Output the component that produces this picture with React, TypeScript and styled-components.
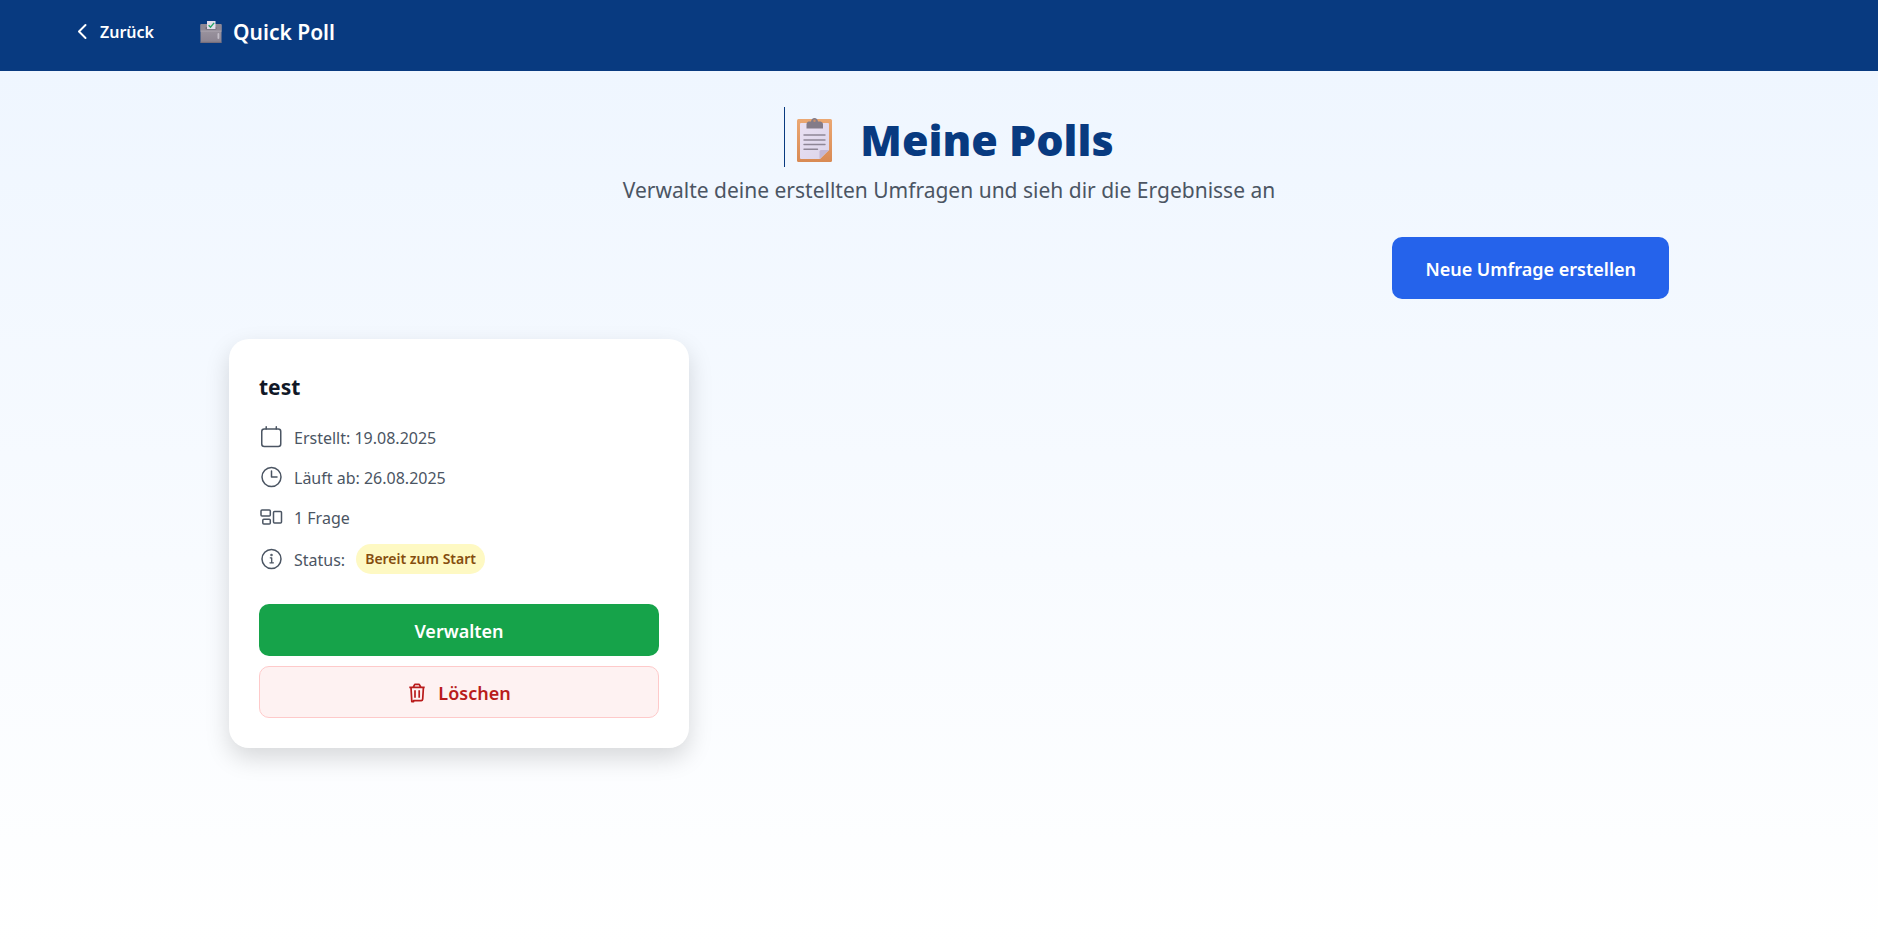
import React from "react";
import styled, { createGlobalStyle } from "styled-components";

const GlobalStyle = createGlobalStyle`
  *, *::before, *::after { box-sizing: border-box; }
  body { margin: 0; }
  body, button {
    font-family: "Segoe UI", "Noto Sans", "Open Sans", sans-serif;
  }
`;

const Page = styled.div`
  min-height: 100vh;
  display: flex;
  flex-direction: column;
  background: #083a80;
`;

const Header = styled.header`
  display: flex;
  align-items: center;
  gap: 46px;
  padding: 16px 76px 23px;
  color: #fff;
`;

const BackLink = styled.a`
  display: flex;
  align-items: center;
  gap: 10px;
  color: inherit;
  text-decoration: none;
  font-size: 16px;
  font-weight: 600;
  line-height: 32px;
`;

const Brand = styled.div`
  display: flex;
  align-items: center;
  gap: 11px;
  font-size: 21px;
  font-weight: 600;
  line-height: 32px;
`;

const Main = styled.main`
  flex: 1;
  padding: 36px 0 40px 20px;
  background: linear-gradient(180deg, #eff6ff 0%, #ffffff 100%);
`;

const Content = styled.div`
  max-width: 1440px;
  margin: 0 auto;
`;

const Intro = styled.div`
  display: flex;
  flex-direction: column;
  align-items: center;
  gap: 7px;
  text-align: center;
`;

const Title = styled.h1`
  display: flex;
  align-items: center;
  gap: 27px;
  margin: 0;
  padding: 6px 0 0 12px;
  border-left: 1px solid #083a80;
  color: #083a80;
  font-size: 43px;
  font-weight: 900;
  line-height: 54px;
`;

const Subtitle = styled.p`
  margin: 0;
  color: #4b5563;
  font-size: 21px;
  line-height: 32px;
`;

const Actions = styled.div`
  display: flex;
  justify-content: flex-end;
  margin: 31px 0 40px;
`;

const Button = styled.button`
  display: flex;
  align-items: center;
  justify-content: center;
  gap: 11px;
  min-height: 52px;
  padding: 2px 20px 0;
  border: 0;
  border-radius: 10px;
  font-size: 18px;
  font-weight: 600;
  line-height: 24px;
  cursor: pointer;
`;

const CreateButton = styled(Button)`
  min-height: 62px;
  padding: 2px 33px 0;
  background: #2563eb;
  color: #fff;
`;

const ManageButton = styled(Button)`
  background: #16a34a;
  color: #fff;
`;

const DeleteButton = styled(Button)`
  border: 1px solid #fecaca;
  background: #fef2f2;
  color: #b91c1c;
`;

const PollGrid = styled.div`
  display: grid;
  grid-template-columns: repeat(3, 1fr);
  gap: 30px;
`;

const Card = styled.article`
  padding: 30px;
  border-radius: 20px;
  background: #fff;
  box-shadow: 0 10px 25px rgba(0, 0, 0, 0.15);
`;

const CardTitle = styled.h2`
  margin: 0 0 19px;
  color: #111827;
  font-size: 21px;
  font-weight: 700;
  line-height: 36px;
`;

const Details = styled.ul`
  display: flex;
  flex-direction: column;
  gap: 14px;
  margin: 0 0 30px;
  padding: 0;
  list-style: none;
`;

const Detail = styled.li`
  display: flex;
  align-items: center;
  gap: 11px;
  color: #4b5563;
  font-size: 16px;
`;

const DetailText = styled.span`
  padding-top: 2px;
  line-height: 24px;
`;

const StatusBadge = styled.span`
  padding: 0 9px;
  border-radius: 15px;
  background: #fef9c3;
  color: #854d0e;
  font-size: 14px;
  font-weight: 600;
  line-height: 30px;
`;

const CardActions = styled.div`
  display: flex;
  flex-direction: column;
  gap: 10px;
`;

const LineIcon = ({ children }: { children: React.ReactNode }) => (
  <svg width="24" height="24" viewBox="0 0 24 24" fill="none" stroke="currentColor" strokeWidth="1.5" strokeLinecap="round" strokeLinejoin="round" aria-hidden="true">
    {children}
  </svg>
);

const ChevronIcon = () => (
  <svg width="14" height="18" viewBox="0 0 14 18" fill="none" stroke="currentColor" strokeWidth="2" strokeLinecap="round" strokeLinejoin="round" aria-hidden="true">
    <path d="M9.500 2 3 8.500l6.500 6.500" />
  </svg>
);

const BallotIcon = () => (
  <svg width="22" height="22" viewBox="0 0 22 22" aria-hidden="true">
    <defs>
      <linearGradient id="ballot" x1="0" y1="0" x2="0" y2="1">
        <stop offset="0" stopColor="#a19ba5" />
        <stop offset="1" stopColor="#8b8390" />
      </linearGradient>
    </defs>
    <rect x="0.500" y="3" width="21" height="19" rx="1" fill="url(#ballot)" />
    <rect x="0.500" y="3" width="21" height="7" rx="1" fill="#8f8894" />
    <rect x="0.500" y="9.500" width="21" height="1.200" fill="#a8a2ac" />
    <rect x="5.500" y="6" width="11" height="2.400" rx="1" fill="#6f6776" />
    <rect x="7" y="0" width="8.500" height="8" fill="#e4dfec" />
    <path d="m8.600 4.200 1.900 1.900 3.600-4.200" fill="none" stroke="#27a567" strokeWidth="1.400" />
    <rect x="17.500" y="12" width="1.800" height="6" rx="0.900" fill="#c3bec8" />
    <rect x="0.500" y="20.800" width="21" height="1.200" fill="#766e7c" />
  </svg>
);

const ClipboardIcon = () => (
  <svg width="36" height="44" viewBox="0 0 36 44" aria-hidden="true">
    <defs>
      <linearGradient id="board" x1="0" y1="0" x2="0" y2="1">
        <stop offset="0" stopColor="#eba873" />
        <stop offset="1" stopColor="#d98a54" />
      </linearGradient>
      <linearGradient id="paper" x1="0" y1="0" x2="1" y2="1">
        <stop offset="0" stopColor="#e9e0f3" />
        <stop offset="1" stopColor="#dcd5ea" />
      </linearGradient>
    </defs>
    <rect x="0" y="1" width="35" height="43" rx="1.500" fill="url(#board)" />
    <path d="M4 5h27q1 0 1 1v26l-9 9H4q-1 0-1-1V6q0-1 1-1z" fill="url(#paper)" />
    <path d="M22.500 41v-7.500q0-1.500 1.500-1.500h8z" fill="#c3b6d3" />
    <path d="M9.500 10.500V6q0-2 2-2.500h2.500Q14.500 0 17.500 0T21 3.500h2.500q2.500 .5 2.500 2.500v4.500z" fill="#837b88" />
    <circle cx="17.500" cy="2.800" r="1.200" fill="#c98d68" />
    <path d="M7 17h21M7 22h21M7 26.500h21M7 31.300h13.500" stroke="#8e8696" strokeWidth="1.400" strokeLinecap="round" />
  </svg>
);

const TrashIcon = () => (
  <svg width="20" height="20" viewBox="0 0 20 20" fill="none" stroke="currentColor" strokeWidth="1.700" strokeLinejoin="round" aria-hidden="true">
    <path d="M2.300 4.300h15.400M6.300 4l1.500-2.600h4.400L13.700 4M4 4.600l.8 14h1.800v-1h7.600q1.300 0 1.500-1.500L16.400 4.600" />
    <path d="M8 7.200v7.600M12.200 7.200v7.600" />
  </svg>
);

export default function App() {
  return (
    <>
      <GlobalStyle />
      <Page>
        <Header>
          <BackLink href="#">
            <ChevronIcon />
            Zurück
          </BackLink>
          <Brand>
            <BallotIcon />
            Quick Poll
          </Brand>
        </Header>
        <Main>
          <Content>
            <Intro>
              <Title>
                <ClipboardIcon />
                Meine Polls
              </Title>
              <Subtitle>Verwalte deine erstellten Umfragen und sieh dir die Ergebnisse an</Subtitle>
            </Intro>
            <Actions>
              <CreateButton type="button">Neue Umfrage erstellen</CreateButton>
            </Actions>
            <PollGrid>
              <Card>
                <CardTitle>test</CardTitle>
                <Details>
                  <Detail>
                    <LineIcon>
                      <rect x="2.750" y="4" width="19" height="17.500" rx="2.500" />
                      <path d="M7.200 1.800V4M17.300 1.800V4" />
                    </LineIcon>
                    <DetailText>Erstellt: 19.08.2025</DetailText>
                  </Detail>
                  <Detail>
                    <LineIcon>
                      <circle cx="12.500" cy="12" r="9.500" />
                      <path d="M12.500 6v6H18" />
                    </LineIcon>
                    <DetailText>Läuft ab: 26.08.2025</DetailText>
                  </Detail>
                  <Detail>
                    <LineIcon>
                      <rect x="2" y="5" width="9.300" height="6" rx="1" />
                      <rect x="3.800" y="14.300" width="7.500" height="4.700" rx="1" />
                      <rect x="14.500" y="6.500" width="8" height="11.500" rx="1" />
                    </LineIcon>
                    <DetailText>1 Frage</DetailText>
                  </Detail>
                  <Detail>
                    <LineIcon>
                      <circle cx="12.500" cy="12" r="9.500" />
                      <path d="M11.300 10.800h1.400v5M11 15.800h3.400" strokeWidth="1.300" />
                      <circle cx="12.500" cy="7.900" r="0.500" />
                    </LineIcon>
                    <DetailText>Status:</DetailText>
                    <StatusBadge>Bereit zum Start</StatusBadge>
                  </Detail>
                </Details>
                <CardActions>
                  <ManageButton type="button">Verwalten</ManageButton>
                  <DeleteButton type="button">
                    <TrashIcon />
                    Löschen
                  </DeleteButton>
                </CardActions>
              </Card>
            </PollGrid>
          </Content>
        </Main>
      </Page>
    </>
  );
}
